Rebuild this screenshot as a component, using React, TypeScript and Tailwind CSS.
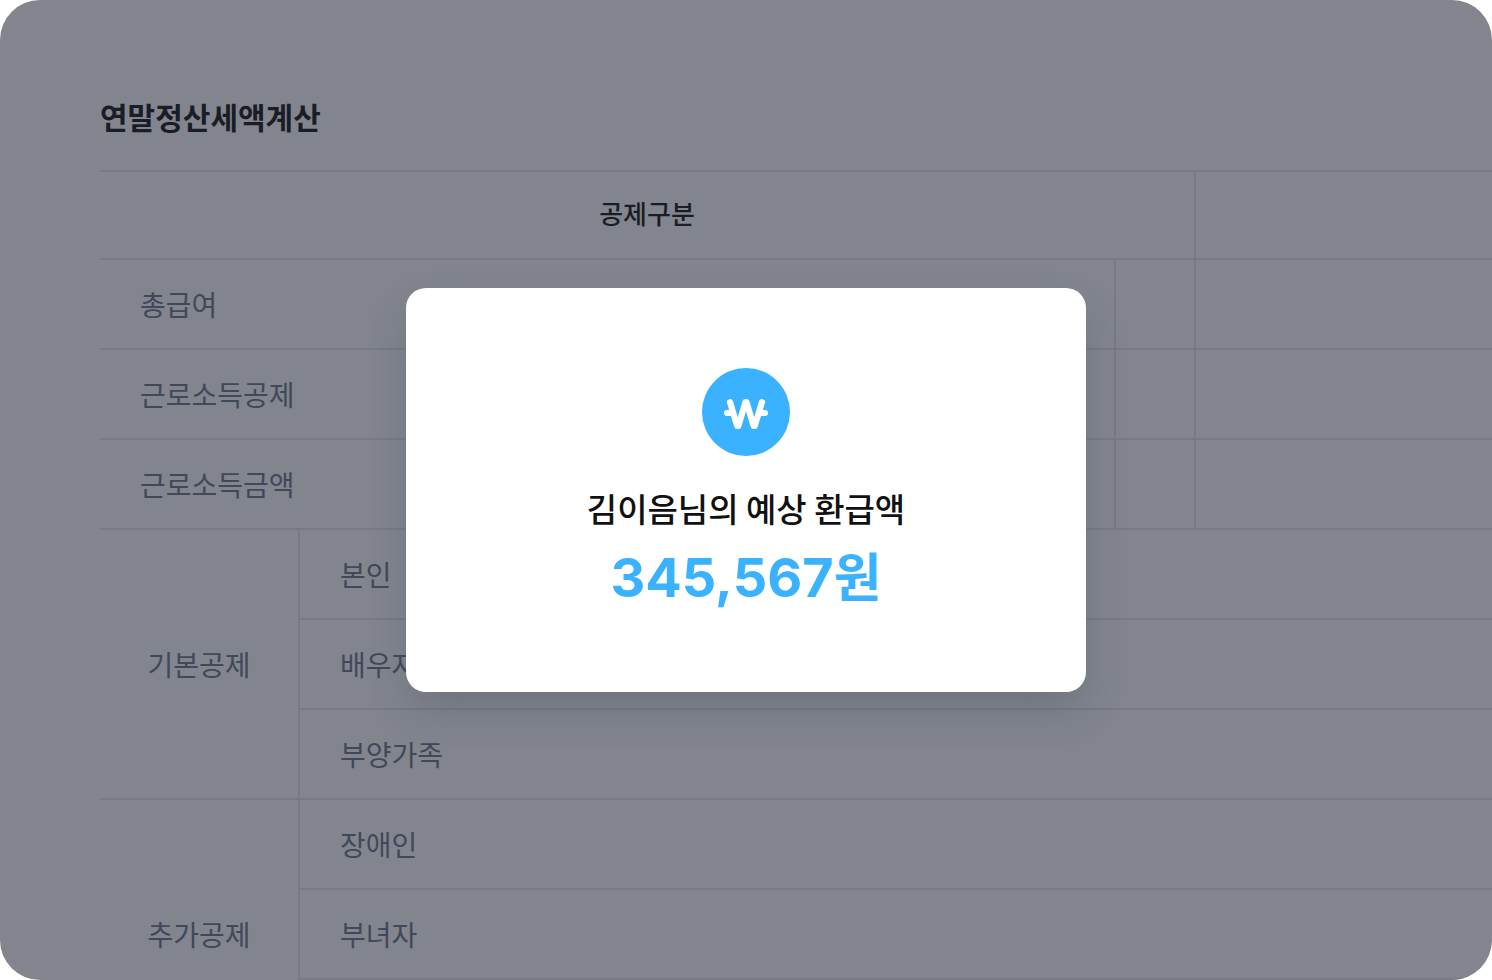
const incomeRows = ["총급여", "근로소득공제", "근로소득금액"];

const deductionGroups = [
  { name: "기본공제", items: ["본인", "배우자", "부양가족"] },
  { name: "추가공제", items: ["장애인", "부녀자", ""] },
];

const WonIcon = () => (
  <svg
    viewBox="0 0 88 88"
    className="size-22"
    fill="none"
    stroke="white"
    strokeLinecap="round"
    strokeLinejoin="round"
    aria-hidden="true"
  >
    <circle cx="44" cy="44" r="44" fill="#3bb2ff" stroke="none" />
    <path d="M28 34.2 35.2 57.8H36.4L43.5 34.2H44.5L51.6 57.8H52.8L60 34.2" strokeWidth="6.2" />
    <path d="M25 45h5M58 45h5" strokeWidth="6" />
  </svg>
);

const TaxTable = () => (
  <table className="w-full table-fixed border-separate border-spacing-0 text-[28px] leading-10 text-[#414859]">
    <colgroup>
      <col className="w-50" />
      <col />
      <col className="w-20" />
      <col className="w-74" />
    </colgroup>
    <thead>
      <tr className="h-[90px] text-[26px] text-[#1a1d26]">
        <th colSpan={3} className="border-y-2 border-r-2 border-[#777a83] px-0 pt-0 pb-1 font-medium">
          공제구분
        </th>
        <td className="border-y-2 border-[#777a83] p-0" />
      </tr>
    </thead>
    <tbody>
      {incomeRows.map((label) => (
        <tr key={label} className="h-[90px]">
          <th
            colSpan={2}
            className="border-r-2 border-b-2 border-[#777a83] py-0 pr-0 pl-10 text-left font-normal"
          >
            {label}
          </th>
          <td className="border-r-2 border-b-2 border-[#777a83] p-0" />
          <td className="border-b-2 border-[#777a83] p-0" />
        </tr>
      ))}
      {deductionGroups.map((group) =>
        group.items.map((item, index) => (
          <tr key={item} className="h-[90px]">
            {index === 0 && (
              <th
                rowSpan={group.items.length}
                className="border-r-2 border-b-2 border-[#777a83] p-0 font-normal"
              >
                {group.name}
              </th>
            )}
            <td colSpan={3} className="border-b-2 border-[#777a83] py-0 pr-0 pl-10">
              {item}
            </td>
          </tr>
        ))
      )}
    </tbody>
  </table>
);

const RefundDialog = () => (
  <div
    role="dialog"
    aria-labelledby="refund-title"
    className="flex w-full max-w-[680px] flex-col items-center rounded-[20px] bg-white p-20 shadow-[0_20px_40px_-4px_rgba(67,73,96,0.3)]"
  >
    <WonIcon />
    <h2 id="refund-title" className="mt-7 text-[33px] leading-12 font-medium whitespace-nowrap text-[#111]">
      김이음님의 예상 환급액
    </h2>
    <p className="mt-3 font-['Inter','Noto_Sans_CJK_KR',sans-serif] text-[54px] leading-17 font-bold whitespace-nowrap text-[#3bb2ff]">
      345,567<span className="text-[52px] leading-none">원</span>
    </p>
  </div>
);

const App = () => {
  return (
    <div className="bg-white font-['Noto_Sans_CJK_KR',sans-serif]">
      <main className="relative h-screen overflow-hidden rounded-[40px] bg-[#82858d] pt-24 pl-25">
        <h1 className="mb-[34px] text-[30px] leading-10 font-semibold text-[#1a1d26]">연말정산세액계산</h1>
        <TaxTable />

        {/* Dialog sits over the table */}
        <div className="absolute inset-0 grid place-items-center">
          <RefundDialog />
        </div>
      </main>
    </div>
  );
};

export default App;
